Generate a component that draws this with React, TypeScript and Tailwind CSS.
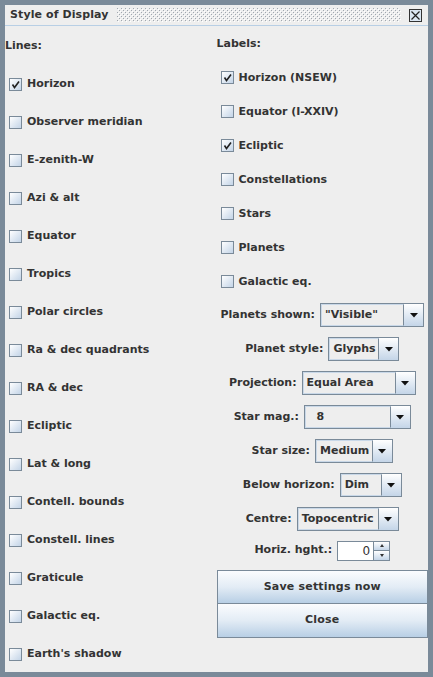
import React from 'react';

const font = "font-['DejaVu_Sans',sans-serif] font-bold text-[11px] text-[#333333]";

const Box: React.FC<{ checked?: boolean }> = ({ checked }) => (
  <div className="w-[13px] h-[13px] shrink-0 border border-[#7a8a99] bg-linear-to-br from-white to-[#c3d4e7] flex items-center justify-center">
    {checked && (
      <svg width="11" height="11" viewBox="0 0 11 11">
        <path d="M2.5 5.5 L4.5 8.5 L9 2.5" fill="none" stroke="#222" strokeWidth="1.6" />
      </svg>
    )}
  </div>
);

const Check: React.FC<{ label: string; checked?: boolean }> = ({ label, checked }) => (
  <div className="flex items-center gap-[5px] pl-[4px]">
    <Box checked={checked} />
    <span className={`${font} pt-[1px]`}>{label}</span>
  </div>
);

const Arrow = () => (
  <svg width="8" height="5" viewBox="0 0 8 5">
    <polygon points="0,0 8,0 4,4.5" fill="#111" />
  </svg>
);

const Combo: React.FC<{ value: string; width: string }> = ({ value, width }) => (
  <div className={`flex h-[24px] border border-[#7a8a99] bg-[#eeeeee] ${width}`}>
    <div className="flex-1 flex items-center border border-[#c9d8e8] border-r-[#7a8a99] pl-[3px] overflow-hidden">
      <span className={`${font} whitespace-pre`}>{value}</span>
    </div>
    <div className="w-[19px] flex items-center justify-center bg-linear-to-b from-white to-[#c4d5e8]">
      <Arrow />
    </div>
  </div>
);

const Row: React.FC<{ label: string; children: React.ReactNode }> = ({ label, children }) => (
  <div className="h-[34px] flex items-center justify-center gap-[5px]">
    <span className={font}>{label}</span>
    {children}
  </div>
);

const lines = [
  ['Horizon', true],
  ['Observer meridian', false],
  ['E-zenith-W', false],
  ['Azi & alt', false],
  ['Equator', false],
  ['Tropics', false],
  ['Polar circles', false],
  ['Ra & dec quadrants', false],
  ['RA & dec', false],
  ['Ecliptic', false],
  ['Lat & long', false],
  ['Contell. bounds', false],
  ['Constell. lines', false],
  ['Graticule', false],
  ['Galactic eq.', false],
  ["Earth's shadow", false],
] as const;

const labels = [
  ['Horizon (NSEW)', true],
  ['Equator (I-XXIV)', false],
  ['Ecliptic', true],
  ['Constellations', false],
  ['Stars', false],
  ['Planets', false],
  ['Galactic eq.', false],
] as const;

const App: React.FC = () => {
  return (
    <div className="w-[433px] h-[677px] bg-[#7a8a99] p-[5px] flex flex-col">
      {/* title bar */}
      <div className="h-[21px] shrink-0 bg-[#eeeeee] border-b border-[#b8cfe5] flex items-center pl-[5px] pr-[6px]">
        <span className={`${font} tracking-[0.1px]`}>Style of Display</span>
        <svg className="flex-1 h-[14px] mx-[8px]">
          <defs>
            <pattern id="bumps" width="4" height="4" patternUnits="userSpaceOnUse">
              <rect x="0" y="0" width="1" height="1" fill="#a0a7af" />
              <rect x="2" y="2" width="1" height="1" fill="#a0a7af" />
              <rect x="1" y="1" width="1" height="1" fill="#ffffff" />
              <rect x="3" y="3" width="1" height="1" fill="#ffffff" />
            </pattern>
          </defs>
          <rect width="100%" height="100%" fill="url(#bumps)" />
        </svg>
        <div className="w-[13px] h-[13px] border border-[#333] bg-[#dbe6f2] flex items-center justify-center">
          <svg width="11" height="11" viewBox="0 0 11 11">
            <path d="M1.5 1.5 L9.5 9.5 M9.5 1.5 L1.5 9.5" stroke="#222" strokeWidth="1.2" />
          </svg>
        </div>
      </div>

      {/* content */}
      <div className="flex-1 bg-[#eeeeee] grid grid-cols-2">
        <div className="flex flex-col">
          <div className="h-[38px] flex items-center pt-[2px]">
            <span className={font}>Lines:</span>
          </div>
          {lines.map(([l, c]) => (
            <div key={l} className="h-[38px] flex items-center pt-[2px]">
              <Check label={l} checked={c} />
            </div>
          ))}
        </div>

        <div className="flex flex-col">
          <div className="h-[34px] flex items-center pt-[2px]">
            <span className={font}>Labels:</span>
          </div>
          {labels.map(([l, c]) => (
            <div key={l} className="h-[34px] flex items-center pt-[1px]">
              <Check label={l} checked={c} />
            </div>
          ))}
          <Row label="Planets shown:">
            <Combo value={'"Visible"'} width="w-[104px]" />
          </Row>
          <Row label="Planet style:">
            <Combo value="Glyphs" width="w-[71px]" />
          </Row>
          <Row label="Projection:">
            <Combo value="Equal Area" width="w-[114px]" />
          </Row>
          <Row label="Star mag.:">
            <Combo value="  8" width="w-[107px]" />
          </Row>
          <Row label="Star size:">
            <Combo value="Medium" width="w-[78px]" />
          </Row>
          <Row label="Below horizon:">
            <Combo value="Dim" width="w-[62px]" />
          </Row>
          <Row label="Centre:">
            <Combo value="Topocentric" width="w-[102px]" />
          </Row>
          <div className="h-[34px] flex items-center justify-center gap-[5px] pb-[5px]">
            <span className={font}>Horiz. hght.:</span>
            <div className="flex h-[20px]">
              <div className="w-[37px] bg-white border border-[#7a8a99] flex items-center justify-end pr-[3px]">
                <span className="font-['DejaVu_Sans',sans-serif] text-[12px] text-[#333333]">0</span>
              </div>
              <div className="w-[16px] flex flex-col border border-l-0 border-[#7a8a99]">
                <div className="flex-1 flex items-center justify-center bg-linear-to-b from-white to-[#c4d5e8] border-b border-[#7a8a99]">
                  <svg width="4" height="3" viewBox="0 0 4 3"><polygon points="0,3 4,3 2,0" fill="#333" /></svg>
                </div>
                <div className="flex-1 flex items-center justify-center bg-linear-to-b from-white to-[#c4d5e8]">
                  <svg width="4" height="3" viewBox="0 0 4 3"><polygon points="0,0 4,0 2,3" fill="#333" /></svg>
                </div>
              </div>
            </div>
          </div>
          <button className="h-[34px] border border-[#7a8a99] bg-linear-to-b from-[#fbfcfe] via-[#e3ecf5] to-[#b8cfe5] flex items-center justify-center">
            <span className={`${font} tracking-[0.2px]`}>Save settings now</span>
          </button>
          <button className="h-[34px] border border-t-0 border-[#7a8a99] bg-linear-to-b from-[#fbfcfe] via-[#e3ecf5] to-[#b8cfe5] flex items-center justify-center">
            <span className={`${font} tracking-[0.2px]`}>Close</span>
          </button>
        </div>
      </div>
    </div>
  );
};

export default App;
